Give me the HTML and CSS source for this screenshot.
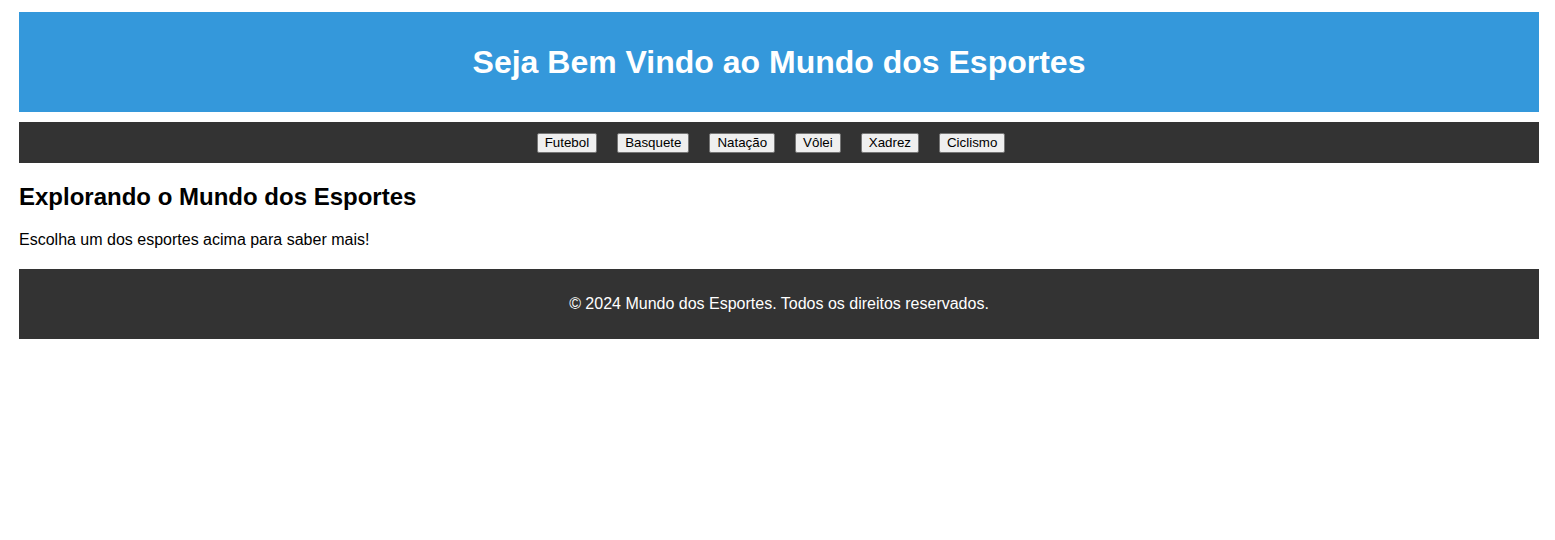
FILE: index.html
```html
<!DOCTYPE html>
<html lang="pt-BR">
<head>
<meta charset="utf-8">
<title>Mundo dos Esportes</title>
<link rel="stylesheet" href="styles.css">
</head>
<body>
<div class="page">
  <header class="hero">
    <h1 class="hero-title">Seja Bem Vindo ao Mundo dos Esportes</h1>
  </header>
  <nav class="nav">
    <button class="nav-btn">Futebol</button>
    <button class="nav-btn">Basquete</button>
    <button class="nav-btn">Natação</button>
    <button class="nav-btn">Vôlei</button>
    <button class="nav-btn">Xadrez</button>
    <button class="nav-btn">Ciclismo</button>
  </nav>
  <main class="content">
    <h2 class="content-title">Explorando o Mundo dos Esportes</h2>
    <p class="content-text">Escolha um dos esportes acima para saber mais!</p>
  </main>
  <footer class="footer">
    <p class="footer-text">© 2024 Mundo dos Esportes. Todos os direitos reservados.</p>
  </footer>
</div>
</body>
</html>
```
FILE: styles.css
```css
html, body {
  margin: 0;
  padding: 0;
  background: #ffffff;
}
body {
  font-family: "Liberation Sans", Arial, sans-serif;
  font-size: 16px;
  color: #000;
}
.page {
  padding: 12px 16px 0 19px;
}
.hero {
  background: #3498db;
  height: 100px;
  display: flex;
  align-items: center;
  justify-content: center;
}
.hero-title {
  margin: 0;
  color: #fff;
  font-size: 32px;
  font-weight: bold;
}
.nav {
  margin-top: 10px;
  background: #333333;
  height: 41px;
  padding-right: 16px;
  display: flex;
  align-items: center;
  justify-content: center;
  gap: 20px;
}
.nav-btn {
  font-family: "Liberation Sans", Arial, sans-serif;
  font-size: 13.33px;
  color: #000;
  background: #efefef;
  border: 1px solid #767676;
  border-radius: 2px;
  padding: 1px 7px;
  height: 20px;
  line-height: 16px;
}
.content-title {
  margin: 20px 0 0;
  font-size: 24px;
  font-weight: bold;
  line-height: 28px;
}
.content-text {
  margin: 20px 0 0;
  font-size: 16px;
  line-height: 18px;
}
.footer {
  margin-top: 20px;
  background: #333333;
  height: 70px;
  display: flex;
  align-items: center;
  justify-content: center;
}
.footer-text {
  margin: 0;
  color: #fff;
  font-size: 16px;
}
```
